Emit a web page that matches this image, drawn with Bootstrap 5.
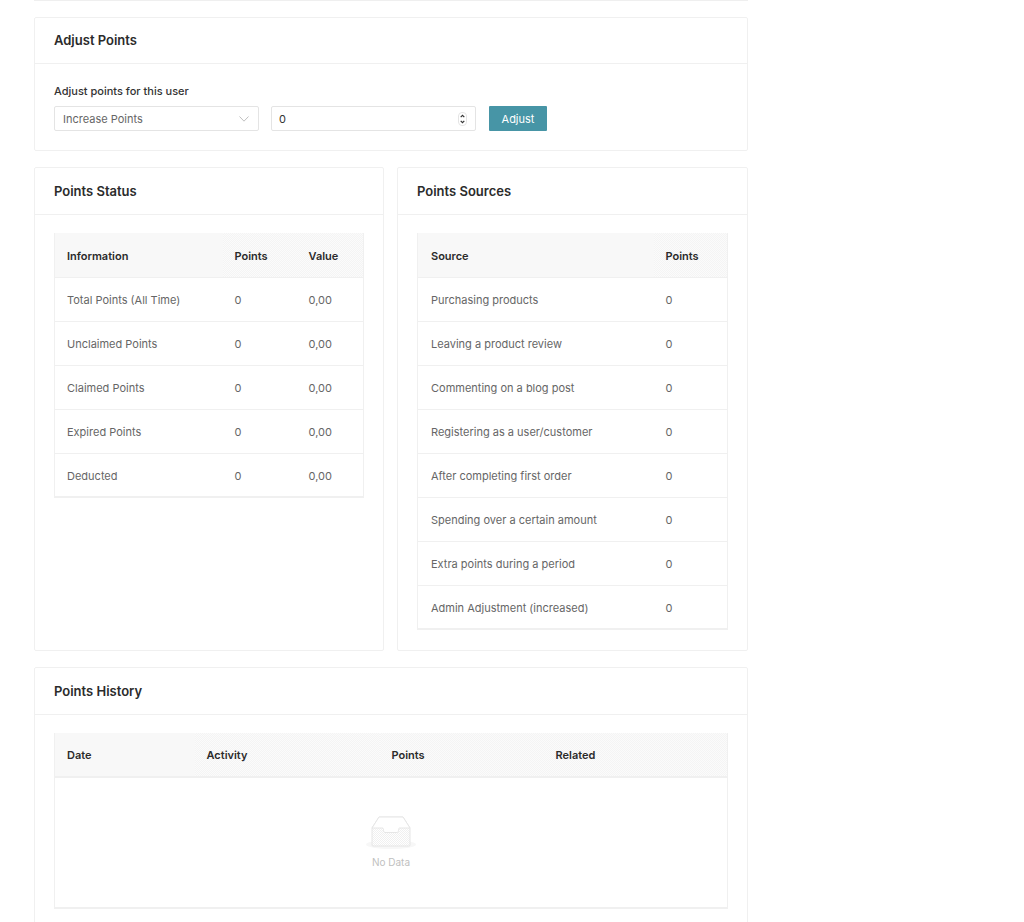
<!DOCTYPE html>
<html lang="en">

<head>
    <meta charset="UTF-8">
    <meta name="viewport" content="width=device-width, initial-scale=1">
    <title>User Points</title>
    <link href="https://cdn.jsdelivr.net/npm/bootstrap@5.3.0/dist/css/bootstrap.min.css" rel="stylesheet">
    <style>
        body {
            font-family: Inter, "Liberation Sans", sans-serif;
            font-size: 11px;
            color: #666;
            background: #fff;
            height: 922px;
            overflow: hidden;
        }

        .page-wrap {
            width: 714px;
            margin-left: 34px;
            display: flex;
            flex-direction: column;
            gap: 16px;
        }

        .top-stub {
            height: 1px;
            background: #efefef;
        }

        .panel {
            border: 1px solid #f0f0f0;
            border-radius: 2px;
            background: #fff;
        }

        .panel-head {
            height: 47px;
            padding: 1px 19px 0;
            display: flex;
            align-items: center;
            border-bottom: 1px solid #f0f0f0;
            font-size: 13px;
            font-weight: 600;
            color: #2b2b2b;
        }

        .panel-body {
            padding: 18px 19px 20px;
        }

        .adjust-head {
            height: 46px;
            padding-top: 0;
        }

        .adjust-body {
            padding: 19px;
        }

        .adjust-label {
            font-size: 11px;
            font-weight: 500;
            color: #333;
            line-height: 16px;
            margin-bottom: 7px;
        }

        .fake-field {
            height: 25px;
            width: 205px;
            border: 1px solid #e4e4e4;
            border-radius: 2px;
            padding: 1px 9px 0 8px;
            font-size: 11px;
            display: flex;
            align-items: center;
            justify-content: space-between;
        }

        .num-field {
            margin-left: 12px;
            padding: 1px 8px 0 7px;
            color: #333;
        }

        .adjust-btn {
            height: 25px;
            width: 58px;
            margin-left: 13px;
            padding: 1px 0 0;
            border: 0;
            border-radius: 1px;
            background: #4795a6;
            color: #fff;
            font-size: 11px;
        }

        .status-row {
            display: grid;
            grid-template-columns: 350px 351px;
            gap: 13px;
        }

        .points-table {
            width: 100%;
            table-layout: fixed;
            margin: 0;
            border-collapse: collapse;
            border: 1px solid #f0f0f0;
            border-top: 0;
            border-bottom-width: 2px;
            font-size: 11px;
        }

        .points-table th,
        .points-table td {
            height: 44px;
            padding: 2px 0 0 12px;
            vertical-align: middle;
            border-bottom: 1px solid #f0f0f0;
        }

        .points-table th {
            background: repeating-conic-gradient(#f4f4f4 0 25%, #fbfbfb 0 50%) 0 0 / 2px 2px;
            color: #2b2b2b;
            font-weight: 600;
        }

        .points-table td {
            color: #666;
        }

        .sources-table th:first-child,
        .sources-table td:first-child {
            padding-left: 13px;
        }

        .no-data {
            height: 131px;
            display: flex;
            flex-direction: column;
            align-items: center;
            padding-top: 38px;
            color: #bfbfbf;
            font-size: 10px;
            border: 1px solid #f0f0f0;
            border-top: 0;
            border-bottom-width: 2px;
        }

        .no-data svg {
            display: block;
            margin-bottom: 6px;
        }
    </style>
</head>

<body>
    <div class="page-wrap">
        <div class="top-stub"></div>

        <!-- Adjust points -->
        <div class="panel">
            <div class="panel-head adjust-head">Adjust Points</div>
            <div class="adjust-body">
                <div class="adjust-label">Adjust points for this user</div>
                <div class="d-flex align-items-center">
                    <div class="fake-field">
                        <span>Increase Points</span>
                        <svg width="10" height="6" viewBox="0 0 10 6" fill="none" stroke="#bfbfbf" stroke-width="1">
                            <path d="M.5.5 5 5.2 9.500.5" />
                        </svg>
                    </div>
                    <div class="fake-field num-field">
                        <span>0</span>
                        <svg width="9" height="14" viewBox="0 0 9 14" fill="none" stroke="#333" stroke-width="1.200">
                            <rect x=".5" y=".5" width="8" height="13" rx="3.500" stroke="#e4e4e4" stroke-width="1" />
                            <path d="M2.700 5.200 4.500 3.400 6.300 5.200M2.700 8.800 4.500 10.600 6.300 8.800" />
                        </svg>
                    </div>
                    <button class="btn adjust-btn" type="button">Adjust</button>
                </div>
            </div>
        </div>

        <!-- Status and sources -->
        <div class="status-row">
            <div class="panel">
                <div class="panel-head">Points Status</div>
                <div class="panel-body" id="statusBody"></div>
            </div>
            <div class="panel">
                <div class="panel-head">Points Sources</div>
                <div class="panel-body" id="sourcesBody"></div>
            </div>
        </div>

        <!-- History -->
        <div class="panel">
            <div class="panel-head">Points History</div>
            <div class="panel-body">
                <table class="points-table">
                    <colgroup>
                        <col style="width: 140px">
                        <col style="width: 185px">
                        <col style="width: 164px">
                        <col>
                    </colgroup>
                    <thead>
                        <tr>
                            <th>Date</th>
                            <th>Activity</th>
                            <th>Points</th>
                            <th>Related</th>
                        </tr>
                    </thead>
                </table>
                <div class="no-data">
                    <svg width="50" height="33" viewBox="0 0 50 33" fill="none">
                        <defs>
                            <pattern id="trayHatch" width="2" height="2" patternUnits="userSpaceOnUse">
                                <rect width="2" height="2" fill="#fff" />
                                <rect width="1" height="1" fill="#f0f0f0" />
                                <rect x="1" y="1" width="1" height="1" fill="#f0f0f0" />
                            </pattern>
                        </defs>
                        <ellipse cx="25" cy="28.500" rx="25" ry="4.500" fill="#f7f7f7" />
                        <path d="M6 12 13 1h24l7 11v17a1 1 0 0 1-1 1H7a1 1 0 0 1-1-1z" fill="url(#trayHatch)" stroke="#e6e6e6" />
                        <path d="M6 12 13 1h24l7 11H34c-1 0-1.500.7-1.500 1.500v1c0 1-.7 2-1.500 2H19c-.8 0-1.500-1-1.500-2v-1c0-.8-.5-1.500-1.500-1.500z" fill="#fff" stroke="#e6e6e6" />
                    </svg>
                    No Data
                </div>
            </div>
        </div>
    </div>

    <script src="https://cdn.jsdelivr.net/npm/bootstrap@5.3.0/dist/js/bootstrap.bundle.min.js"></script>
    <script>
        const statusRows = ['Total Points (All Time)', 'Unclaimed Points', 'Claimed Points', 'Expired Points', 'Deducted'];
        const sourceRows = ['Purchasing products', 'Leaving a product review', 'Commenting on a blog post',
            'Registering as a user/customer', 'After completing first order', 'Spending over a certain amount',
            'Extra points during a period', 'Admin Adjustment (increased)'];

        document.getElementById('statusBody').innerHTML = `
            <table class="points-table">
                <colgroup><col style="width: 168px"><col style="width: 74px"><col></colgroup>
                <thead><tr><th>Information</th><th>Points</th><th>Value</th></tr></thead>
                <tbody>${statusRows.map(r => `<tr><td>${r}</td><td>0</td><td>0,00</td></tr>`).join('')}</tbody>
            </table>`;

        document.getElementById('sourcesBody').innerHTML = `
            <table class="points-table sources-table">
                <colgroup><col style="width: 236px"><col></colgroup>
                <thead><tr><th>Source</th><th>Points</th></tr></thead>
                <tbody>${sourceRows.map(r => `<tr><td>${r}</td><td>0</td></tr>`).join('')}</tbody>
            </table>`;
    </script>
</body>

</html>
